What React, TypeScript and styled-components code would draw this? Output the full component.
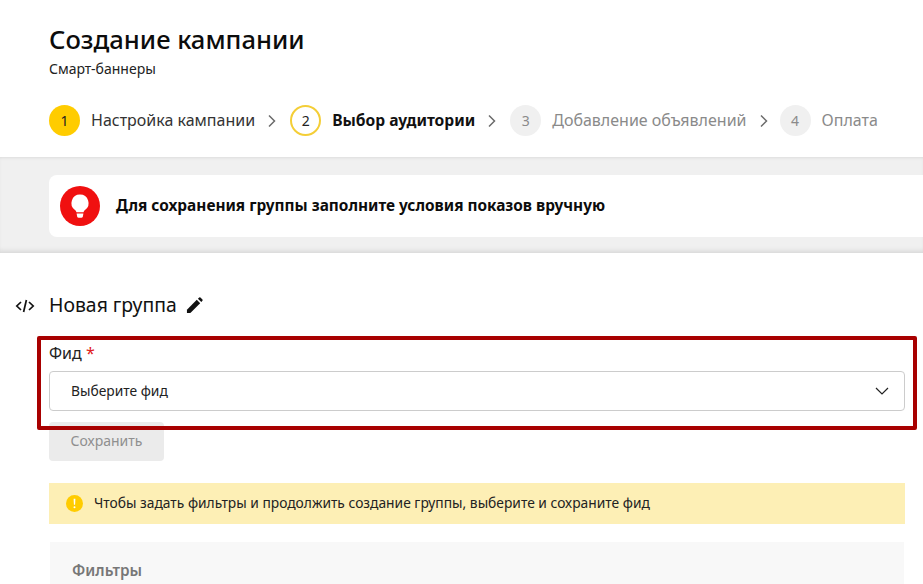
import { createGlobalStyle, styled } from 'styled-components';

const steps = [
  { num: 1, title: 'Настройка кампании', state: 'done' },
  { num: 2, title: 'Выбор аудитории', state: 'active' },
  { num: 3, title: 'Добавление объявлений', state: 'todo' },
  { num: 4, title: 'Оплата', state: 'todo' },
] as const;

type StepState = 'done' | 'active' | 'todo';

export default function App() {
  return (
    <Page>
      <GlobalStyle />
      <Header>
        <Title>Создание кампании</Title>
        <Subtitle>Смарт-баннеры</Subtitle>
        <Stepper>
          {steps.map((step, i) => (
            <Step key={step.num} $state={step.state}>
              <StepCircle $state={step.state}>{step.num}</StepCircle>
              <StepTitle $state={step.state}>{step.title}</StepTitle>
              {i < steps.length - 1 && (
                <svg width="10" height="14" viewBox="0 0 10 14" fill="none">
                  <path d="M2 1.5 7.5 7 2 12.5" stroke="#6b6b6b" strokeWidth="1.5" />
                </svg>
              )}
            </Step>
          ))}
        </Stepper>
      </Header>

      <NoticeBand>
        <NoticeCard>
          <NoticeIcon>
            <svg width="40" height="40" viewBox="0 0 40 40">
              <circle cx="20" cy="20" r="20" fill="#f01010" />
              <path
                d="M20 8.500a8.500 8.500 0 0 0-5 15.400c.9.700 1.300 1.500 1.400 2.400h7.200c.1-.9.500-1.700 1.400-2.400a8.500 8.500 0 0 0-5-15.400Z"
                fill="#fff"
              />
              <path d="M16.600 27.600h6.800l-.6 3.200a1.500 1.500 0 0 1-1.400 1h-2.800a1.500 1.500 0 0 1-1.400-1Z" fill="#fff" />
            </svg>
          </NoticeIcon>
          <NoticeText>Для сохранения группы заполните условия показов вручную</NoticeText>
        </NoticeCard>
      </NoticeBand>

      <Content>
        <GroupHeading>
          <CodeMark>
            <svg width="20" height="14" viewBox="0 0 20 14" fill="none" stroke="#111" strokeWidth="1.7">
              <path d="M6 3 1.800 7 6 11" />
              <path d="M14 3l4.200 4L14 11" />
              <path d="M11.400 1 8.600 13" />
            </svg>
          </CodeMark>
          <GroupName>Новая группа</GroupName>
          <svg width="17" height="17" viewBox="0 0 18 18">
            <path d="M1 17v-3.600L11.400 3l3.600 3.600L4.600 17Z" fill="#111" />
            <path d="M12.600 1.800 14 .6a1 1 0 0 1 1.300 0l2.100 2.100a1 1 0 0 1 0 1.300l-1.200 1.400Z" fill="#111" />
          </svg>
        </GroupHeading>

        <FeedField>
          <FieldLabel>
            Фид <Required>*</Required>
          </FieldLabel>
          <Select>
            <SelectValue>Выберите фид</SelectValue>
            <svg width="14" height="8" viewBox="0 0 14 8" fill="none">
              <path d="M1 1l6 6 6-6" stroke="#222" strokeWidth="1.2" />
            </svg>
          </Select>
          <Highlight />
        </FeedField>

        <SaveButton type="button">Сохранить</SaveButton>

        <Hint>
          <svg width="17" height="17" viewBox="0 0 17 17">
            <circle cx="8.500" cy="8.500" r="8.500" fill="#fc0" />
            <path d="M7.600 3.800h1.800l-.3 6H7.900Z" fill="#fff" />
            <circle cx="8.500" cy="12.200" r="1" fill="#fff" />
          </svg>
          <HintText>Чтобы задать фильтры и продолжить создание группы, выберите и сохраните фид</HintText>
        </Hint>

        <FiltersPanel>
          <FiltersTitle>Фильтры</FiltersTitle>
        </FiltersPanel>
      </Content>
    </Page>
  );
}

const GlobalStyle = createGlobalStyle`
  html, body {
    margin: 0;
    height: 100%;
    overflow: hidden;
    background: #fff;
  }
  body {
    font-family: 'Noto Sans', 'Open Sans', Arial, sans-serif;
    color: #111;
  }
`;

const Page = styled.div`
  width: 923px;
  height: 584px;
  overflow: hidden;
`;

const Header = styled.header`
  height: 157px;
  box-sizing: border-box;
  padding: 24px 0 0 49px;
`;

const Title = styled.h1`
  margin: 0;
  font-size: 25.6px;
  line-height: 32px;
  font-weight: 500;
  color: #0c0c0c;
`;

const Subtitle = styled.div`
  margin-top: 5px;
  font-size: 14px;
  line-height: 16px;
  color: #222;
`;

const Stepper = styled.div`
  display: flex;
  margin-top: 28px;
`;

const Step = styled.div<{ $state: StepState }>`
  display: flex;
  align-items: center;
  margin-right: ${(p) => (p.$state === 'todo' ? '11px' : '13px')};
`;

const circleStyles: Record<StepState, string> = {
  done: 'background: #fc0; color: #222;',
  active: 'background: #fff; border: 2px solid #f4ce37; color: #222;',
  todo: 'background: #f0f0f0; color: #8a8a8a;',
};

const StepCircle = styled.div<{ $state: StepState }>`
  width: 31px;
  height: 31px;
  box-sizing: border-box;
  border-radius: 50%;
  display: flex;
  align-items: center;
  justify-content: center;
  font-size: 14px;
  ${(p) => circleStyles[p.$state]}
`;

const StepTitle = styled.span<{ $state: StepState }>`
  margin: 0 12px 0 11px;
  font-size: ${(p) => (p.$state === 'active' ? '15.6px' : '16px')};
  line-height: 31px;
  font-weight: ${(p) => (p.$state === 'active' ? 700 : 400)};
  color: ${(p) => (p.$state === 'todo' ? '#8a8a8a' : p.$state === 'active' ? '#111' : '#333')};
`;

const NoticeBand = styled.section`
  height: 96px;
  box-sizing: border-box;
  padding: 18px 0 16px 49px;
  background: #f0f0f0;
  box-shadow: inset 0 3px 3px -2px #dcdcdc, inset 0 -5px 5px -3px #d6d6d6;
`;

const NoticeCard = styled.div`
  height: 62px;
  display: flex;
  align-items: center;
  padding-left: 11px;
  background: #fff;
  border-radius: 8px 0 0 8px;
`;

const NoticeIcon = styled.div`
  display: flex;
  margin-right: 16px;
`;

const NoticeText = styled.div`
  margin-top: -2px;
  font-size: 15.4px;
  font-weight: 700;
  color: #0c0c0c;
`;

const Content = styled.main`
  padding: 40px 18px 0 49px;
`;

const GroupHeading = styled.div`
  position: relative;
  display: flex;
  align-items: center;
  gap: 9px;
  height: 24px;
`;

const CodeMark = styled.span`
  position: absolute;
  left: -34px;
  top: 6px;
  display: flex;
`;

const GroupName = styled.h2`
  margin: 0;
  font-size: 19.4px;
  line-height: 24px;
  font-weight: 400;
  color: #111;
`;

const FeedField = styled.div`
  position: relative;
  margin-top: 25px;
`;

const FieldLabel = styled.div`
  margin-bottom: 7px;
  font-size: 16px;
  line-height: 22px;
  color: #222;
`;

const Required = styled.span`
  color: #e02020;
`;

const Select = styled.div`
  height: 40px;
  box-sizing: border-box;
  display: flex;
  align-items: center;
  justify-content: space-between;
  padding: 0 15px 0 21px;
  border: 1px solid #ccc;
  border-radius: 4px;
  font-size: 13.8px;
  color: #222;
`;

const SelectValue = styled.span`
  margin-top: -2px;
`;

const Highlight = styled.div`
  position: absolute;
  left: -12px;
  right: -12px;
  top: -6px;
  bottom: -19px;
  border: 4px solid #a80000;
  border-radius: 2px;
  pointer-events: none;
`;

const SaveButton = styled.button`
  display: block;
  width: 115px;
  height: 39px;
  margin-top: 11px;
  padding: 0 0 2px;
  border: none;
  border-radius: 4px;
  background: #ebebeb;
  color: #8f8f8f;
  font-family: inherit;
  font-size: 14px;
`;

const Hint = styled.div`
  height: 41px;
  box-sizing: border-box;
  margin-top: 22px;
  padding-left: 17px;
  display: flex;
  align-items: center;
  gap: 11px;
  background: #fdefb5;
  font-size: 13.8px;
  color: #222;
`;

const HintText = styled.span`
  margin-top: -2px;
`;

const FiltersPanel = styled.section`
  margin: 18px 1px 0;
  height: 80px;
  box-sizing: border-box;
  padding: 18px 22px;
  background: #f8f8f8;
`;

const FiltersTitle = styled.div`
  font-size: 15.3px;
  line-height: 20px;
  font-weight: 600;
  color: #777;
`;
